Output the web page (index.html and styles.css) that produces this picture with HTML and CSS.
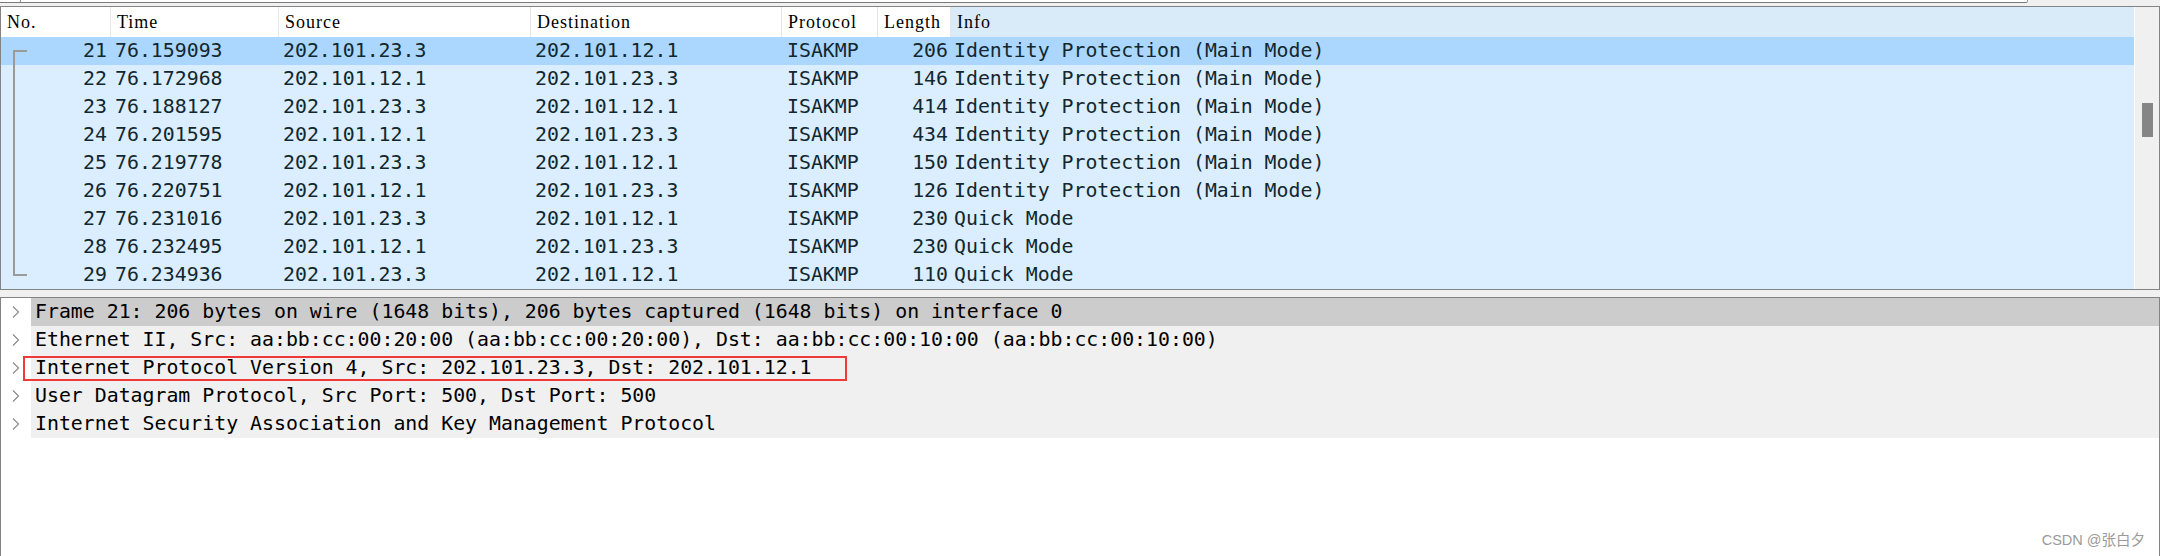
FILE: index.html
```html
<!DOCTYPE html>
<html>
<head>
<meta charset="utf-8">
<link rel="stylesheet" href="styles.css">
</head>
<body>
<div class="topbar"><div class="filterbox"><span class="filtermark"></span></div></div>

<div class="packet-pane">
  <div class="list">
    <div class="grid header">
      <div class="hcell">No.</div>
      <div class="hcell">Time</div>
      <div class="hcell">Source</div>
      <div class="hcell">Destination</div>
      <div class="hcell">Protocol</div>
      <div class="hcell">Length</div>
      <div class="hcell info">Info</div>
    </div>
    <div class="grid row selected">
      <div class="c no tree first">21</div><div class="c">76.159093</div><div class="c">202.101.23.3</div><div class="c">202.101.12.1</div><div class="c proto">ISAKMP</div><div class="c len">206</div><div class="c infoc">Identity Protection (Main Mode)</div>
    </div>
    <div class="grid row">
      <div class="c no tree mid">22</div><div class="c">76.172968</div><div class="c">202.101.12.1</div><div class="c">202.101.23.3</div><div class="c proto">ISAKMP</div><div class="c len">146</div><div class="c infoc">Identity Protection (Main Mode)</div>
    </div>
    <div class="grid row">
      <div class="c no tree mid">23</div><div class="c">76.188127</div><div class="c">202.101.23.3</div><div class="c">202.101.12.1</div><div class="c proto">ISAKMP</div><div class="c len">414</div><div class="c infoc">Identity Protection (Main Mode)</div>
    </div>
    <div class="grid row">
      <div class="c no tree mid">24</div><div class="c">76.201595</div><div class="c">202.101.12.1</div><div class="c">202.101.23.3</div><div class="c proto">ISAKMP</div><div class="c len">434</div><div class="c infoc">Identity Protection (Main Mode)</div>
    </div>
    <div class="grid row">
      <div class="c no tree mid">25</div><div class="c">76.219778</div><div class="c">202.101.23.3</div><div class="c">202.101.12.1</div><div class="c proto">ISAKMP</div><div class="c len">150</div><div class="c infoc">Identity Protection (Main Mode)</div>
    </div>
    <div class="grid row">
      <div class="c no tree mid">26</div><div class="c">76.220751</div><div class="c">202.101.12.1</div><div class="c">202.101.23.3</div><div class="c proto">ISAKMP</div><div class="c len">126</div><div class="c infoc">Identity Protection (Main Mode)</div>
    </div>
    <div class="grid row">
      <div class="c no tree mid">27</div><div class="c">76.231016</div><div class="c">202.101.23.3</div><div class="c">202.101.12.1</div><div class="c proto">ISAKMP</div><div class="c len">230</div><div class="c infoc">Quick Mode</div>
    </div>
    <div class="grid row">
      <div class="c no tree mid">28</div><div class="c">76.232495</div><div class="c">202.101.12.1</div><div class="c">202.101.23.3</div><div class="c proto">ISAKMP</div><div class="c len">230</div><div class="c infoc">Quick Mode</div>
    </div>
    <div class="grid row">
      <div class="c no tree last">29</div><div class="c">76.234936</div><div class="c">202.101.23.3</div><div class="c">202.101.12.1</div><div class="c proto">ISAKMP</div><div class="c len">110</div><div class="c infoc">Quick Mode</div>
    </div>
  </div>
  <div class="scrollbar"><div class="thumb"></div></div>
</div>

<div class="detail-pane">
  <div class="drow">
    <span class="chev"><svg width="8" height="12" viewBox="0 0 8 12"><polyline points="1,0.5 6.5,6 1,11.5" fill="none" stroke="#8c8c8c" stroke-width="1.2"/></svg></span>
    <span class="dlabel sel">Frame 21: 206 bytes on wire (1648 bits), 206 bytes captured (1648 bits) on interface 0</span>
  </div>
  <div class="drow">
    <span class="chev"><svg width="8" height="12" viewBox="0 0 8 12"><polyline points="1,0.5 6.5,6 1,11.5" fill="none" stroke="#8c8c8c" stroke-width="1.2"/></svg></span>
    <span class="dlabel">Ethernet II, Src: aa:bb:cc:00:20:00 (aa:bb:cc:00:20:00), Dst: aa:bb:cc:00:10:00 (aa:bb:cc:00:10:00)</span>
  </div>
  <div class="drow">
    <span class="chev"><svg width="8" height="12" viewBox="0 0 8 12"><polyline points="1,0.5 6.5,6 1,11.5" fill="none" stroke="#8c8c8c" stroke-width="1.2"/></svg></span>
    <span class="dlabel">Internet Protocol Version 4, Src: 202.101.23.3, Dst: 202.101.12.1</span>
    <span class="redbox"></span>
  </div>
  <div class="drow">
    <span class="chev"><svg width="8" height="12" viewBox="0 0 8 12"><polyline points="1,0.5 6.5,6 1,11.5" fill="none" stroke="#8c8c8c" stroke-width="1.2"/></svg></span>
    <span class="dlabel">User Datagram Protocol, Src Port: 500, Dst Port: 500</span>
  </div>
  <div class="drow">
    <span class="chev"><svg width="8" height="12" viewBox="0 0 8 12"><polyline points="1,0.5 6.5,6 1,11.5" fill="none" stroke="#8c8c8c" stroke-width="1.2"/></svg></span>
    <span class="dlabel">Internet Security Association and Key Management Protocol</span>
  </div>
  <div class="watermark">CSDN @张白夕</div>
</div>
</body>
</html>
```

FILE: styles.css
```css
html, body {
  margin: 0;
  padding: 0;
}
body {
  width: 2160px;
  height: 556px;
  overflow: hidden;
  background: #f0f0f0;
  font-family: "DejaVu Sans Mono", monospace;
}

.topbar {
  height: 6px;
  display: flex;
}
.filterbox {
  position: relative;
  width: 2027px;
  height: 2px;
  background: #ffffff;
  border-bottom: 1px solid #7a7a7a;
  border-right: 1px solid #9a9a9a;
  border-bottom-right-radius: 2px;
}
.filtermark {
  position: absolute;
  left: 20px;
  top: 0;
  width: 1px;
  height: 2px;
  background: #9a9a9a;
}

.packet-pane {
  display: flex;
  height: 282px;
  border: 1px solid #838383;
  background: #ffffff;
}
.list {
  flex: 1;
  display: flex;
  flex-direction: column;
  background: #ffffff;
}
.grid {
  display: grid;
  grid-template-columns: 110px 168px 252px 251px 96px 73px 1fr;
}
.header {
  height: 30px;
  font-family: "Liberation Serif", serif;
  font-size: 18px;
  letter-spacing: 1px;
  color: #000000;
}
.hcell {
  line-height: 30px;
  padding-left: 6px;
  border-right: 1px solid #e6e6e6;
  white-space: nowrap;
  overflow: hidden;
}
.hcell.info {
  background: #d9eaf8;
  border-right: none;
}

.row {
  height: 28px;
  background: #daeeff;
  color: #12272e;
  font-size: 19.85px;
}
.row.selected {
  background: #abd7ff;
}
.c {
  line-height: 27px;
  padding-left: 4px;
  white-space: nowrap;
  overflow: hidden;
}
.c.no {
  text-align: right;
  padding-right: 4px;
  position: relative;
}
.c.proto {
  padding-left: 5px;
}
.c.len {
  text-align: right;
  padding-left: 0;
  padding-right: 3px;
}
.c.infoc {
  padding-left: 3px;
}

.tree::before,
.tree::after {
  content: "";
  position: absolute;
  background: #9a9a9a;
}
.tree.first::before {
  left: 12px;
  top: 13px;
  width: 2px;
  height: 15px;
}
.tree.first::after {
  left: 12px;
  top: 13px;
  width: 14px;
  height: 2px;
}
.tree.mid::before {
  left: 12px;
  top: 0;
  width: 2px;
  height: 28px;
}
.tree.mid::after {
  display: none;
}
.tree.last::before {
  left: 12px;
  top: 0;
  width: 2px;
  height: 15px;
}
.tree.last::after {
  left: 12px;
  top: 13px;
  width: 14px;
  height: 2px;
}

.scrollbar {
  width: 25px;
  border-left: 1px solid #ffffff;
  background: #f0f0f0;
  display: flex;
  flex-direction: column;
  padding-top: 96px;
  box-sizing: border-box;
}
.thumb {
  margin-left: 7px;
  width: 11px;
  height: 34px;
  background: #858585;
}

.detail-pane {
  position: relative;
  margin-top: 7px;
  height: 262px;
  border: 1px solid #838383;
  background: #ffffff;
  font-size: 19.85px;
  color: #000000;
}
.drow {
  position: relative;
  display: flex;
  height: 28px;
}
.chev {
  width: 30px;
  display: flex;
  align-items: center;
  padding-left: 11px;
  box-sizing: border-box;
}
.chev svg {
  display: block;
}
.dlabel {
  flex: 1;
  background: #f0f0f0;
  line-height: 28px;
  padding-left: 4px;
  white-space: nowrap;
  overflow: hidden;
}
.dlabel.sel {
  background: #cccccc;
}
.redbox {
  position: absolute;
  left: 22px;
  top: 2px;
  width: 824px;
  height: 25px;
  box-sizing: border-box;
  border: 2px solid #f03a3a;
}
.watermark {
  position: absolute;
  right: 14px;
  top: 234px;
  font-family: "Liberation Sans", "Noto Sans CJK SC", sans-serif;
  font-size: 14.5px;
  line-height: 16px;
  color: #9a9a9a;
}
```
